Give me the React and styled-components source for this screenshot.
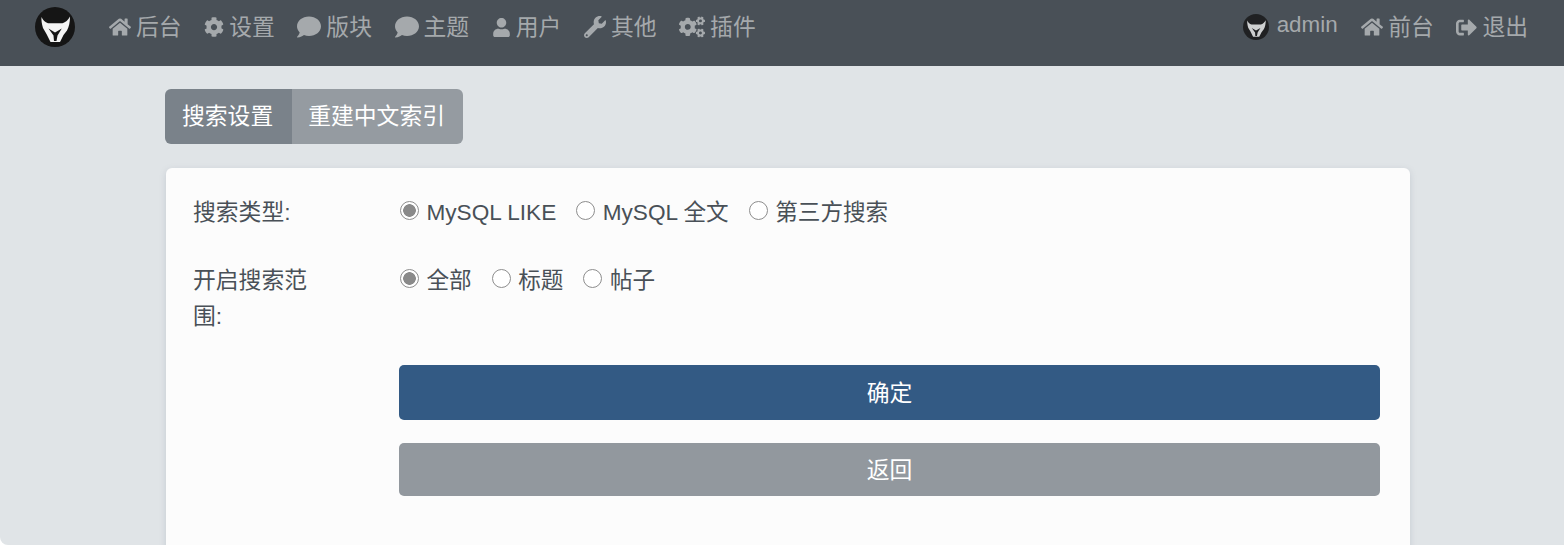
import React from 'react'
import styled, { createGlobalStyle } from 'styled-components'
import { FaHome, FaCog, FaComment, FaUser, FaWrench, FaCogs, FaSignOutAlt } from 'react-icons/fa'

const GlobalStyle = createGlobalStyle`
  html, body {
    margin: 0;
    background: #fff;
  }
  body {
    font-family: "Liberation Sans", "Noto Sans CJK SC", sans-serif;
    overflow: hidden;
  }
`

const Page = styled.div`
  height: 545px;
  background: #e0e4e7;
  border-bottom-left-radius: 8px;
  overflow: hidden;
`

const TopBar = styled.header`
  height: 66px;
  box-sizing: border-box;
  padding: 7px 36px 0 35px;
  background: #495057;
  display: flex;
  justify-content: space-between;
  align-items: flex-start;
`

const NavGroup = styled.nav`
  height: 40px;
  display: flex;
  align-items: center;
  gap: 22.6px;
`

const NavItem = styled.a`
  display: flex;
  align-items: center;
  gap: 5px;
  font-size: 22.8px;
  color: #a5a9ac;
  svg {
    font-size: ${(p) => p.$icon || 20}px;
  }
`

const NavText = styled.span`
  margin-bottom: 4px;
`

const LogoLink = styled.a`
  display: flex;
  margin-right: 11.4px;
`

const UserItem = styled(NavItem)`
  gap: 8px;
  margin-right: 1px;
  font-size: 22.4px;
`

const Avatar = styled.span`
  display: flex;
  opacity: 0.78;
`

const Main = styled.main`
  width: 1245px;
  margin-left: 165px;
  padding-top: 23px;
`

const Tabs = styled.div`
  display: inline-flex;
  height: 55px;
  border-radius: 6px;
  overflow: hidden;
  margin-bottom: 24px;
  vertical-align: top;
`

const Tab = styled.a`
  display: flex;
  align-items: center;
  padding: 0 ${(p) => (p.$active ? '19px 5px 17px' : '18px 5px 16px')};
  font-size: 22.8px;
  color: #fff;
  background: ${(p) => (p.$active ? '#7a828a' : '#959ba1')};
`

const Card = styled.section`
  margin-left: 1px;
  background: #fcfcfc;
  border-radius: 6px;
  padding: 26px 30px 60px 27px;
  box-shadow: 0 2px 6px rgba(120, 130, 150, 0.25);
`

const Row = styled.div`
  display: flex;
  margin-bottom: ${(p) => p.$gap || 0}px;
  line-height: 36px;
  color: #495057;
`

const RowLabel = styled.label`
  width: 118px;
  margin-right: 88px;
  font-size: 22.8px;
`

const RadioGroup = styled.div`
  display: flex;
  align-items: flex-start;
  gap: 19px;
  padding-top: 1px;
  font-size: 22.6px;
`

const RadioLabel = styled.label`
  display: flex;
  align-items: center;
  gap: 7.5px;
`

const RadioInput = styled.input`
  appearance: none;
  width: 19px;
  height: 19px;
  margin: -6px 0 0 1px;
  box-sizing: border-box;
  border: 1.5px solid #8d8d8d;
  border-radius: 50%;
  background: #fff;
  &:checked {
    background: radial-gradient(circle, #8a8a8a 0 6px, #fff 6.6px);
  }
`

const Actions = styled.div`
  margin-left: 206px;
  display: flex;
  flex-direction: column;
`

const Button = styled.button`
  height: ${(p) => (p.$primary ? 55 : 53)}px;
  margin-bottom: 23px;
  padding: 0 0 3px;
  border: none;
  border-radius: 5px;
  font: inherit;
  font-size: 22.8px;
  color: #fff;
  background: ${(p) => (p.$primary ? '#335a84' : '#92989e')};
`

const Logo = ({ size }) => (
  <svg width={size} height={size} viewBox="0 0 40 40" style={{ flexShrink: 0 }}>
    <circle cx="20" cy="20" r="20" fill="#151515" />
    <path
      d="M6.5 10C8 13 10 15.5 13 16.2H27.5C30.5 15.5 33 13 35 9.5C35 15 34 20 32 23.5L28.5 28L25 35H15.5L11.5 27L8 21C6.8 17 6.2 13 6.5 10Z"
      fill="#f4f4f4"
    />
    <path
      d="M13.5 21.5L20 25.5L26.8 21.5L22.5 28.5L21.5 34H19L18.5 28.5Z"
      fill="#151515"
    />
    <path d="M16.5 21H24L20 23.6Z" fill="#f4f4f4" />
  </svg>
)

const navLeft = [
  { Icon: FaHome, text: '后台', size: 22 },
  { Icon: FaCog, text: '设置', size: 20 },
  { Icon: FaComment, text: '版块', size: 24 },
  { Icon: FaComment, text: '主题', size: 24 },
  { Icon: FaUser, text: '用户', size: 19 },
  { Icon: FaWrench, text: '其他', size: 22 },
  { Icon: FaCogs, text: '插件', size: 26 },
]

const navRight = [
  { Icon: FaHome, text: '前台', size: 22 },
  { Icon: FaSignOutAlt, text: '退出', size: 21 },
]

export default function App() {
  return (
    <Page>
      <GlobalStyle />
      <TopBar>
        <NavGroup>
          <LogoLink>
            <Logo size={40} />
          </LogoLink>
          {navLeft.map(({ Icon, text, size }) => (
            <NavItem key={text} $icon={size}>
              <Icon />
              <NavText>{text}</NavText>
            </NavItem>
          ))}
        </NavGroup>
        <NavGroup>
          <UserItem>
            <Avatar><Logo size={26} /></Avatar>
            <NavText>admin</NavText>
          </UserItem>
          {navRight.map(({ Icon, text, size }) => (
            <NavItem key={text} $icon={size}>
              <Icon />
              <NavText>{text}</NavText>
            </NavItem>
          ))}
        </NavGroup>
      </TopBar>
      <Main>
        <Tabs>
          <Tab $active>搜索设置</Tab>
          <Tab>重建中文索引</Tab>
        </Tabs>
        <Card>
          <Row $gap={31}>
            <RowLabel>搜索类型:</RowLabel>
            <RadioGroup>
              <RadioLabel><RadioInput type="radio" name="type" defaultChecked />MySQL LIKE</RadioLabel>
              <RadioLabel><RadioInput type="radio" name="type" />MySQL 全文</RadioLabel>
              <RadioLabel><RadioInput type="radio" name="type" />第三方搜索</RadioLabel>
            </RadioGroup>
          </Row>
          <Row $gap={31}>
            <RowLabel>开启搜索范围:</RowLabel>
            <RadioGroup>
              <RadioLabel><RadioInput type="radio" name="range" defaultChecked />全部</RadioLabel>
              <RadioLabel><RadioInput type="radio" name="range" />标题</RadioLabel>
              <RadioLabel><RadioInput type="radio" name="range" />帖子</RadioLabel>
            </RadioGroup>
          </Row>
          <Actions>
            <Button $primary>确定</Button>
            <Button>返回</Button>
          </Actions>
        </Card>
      </Main>
    </Page>
  )
}
